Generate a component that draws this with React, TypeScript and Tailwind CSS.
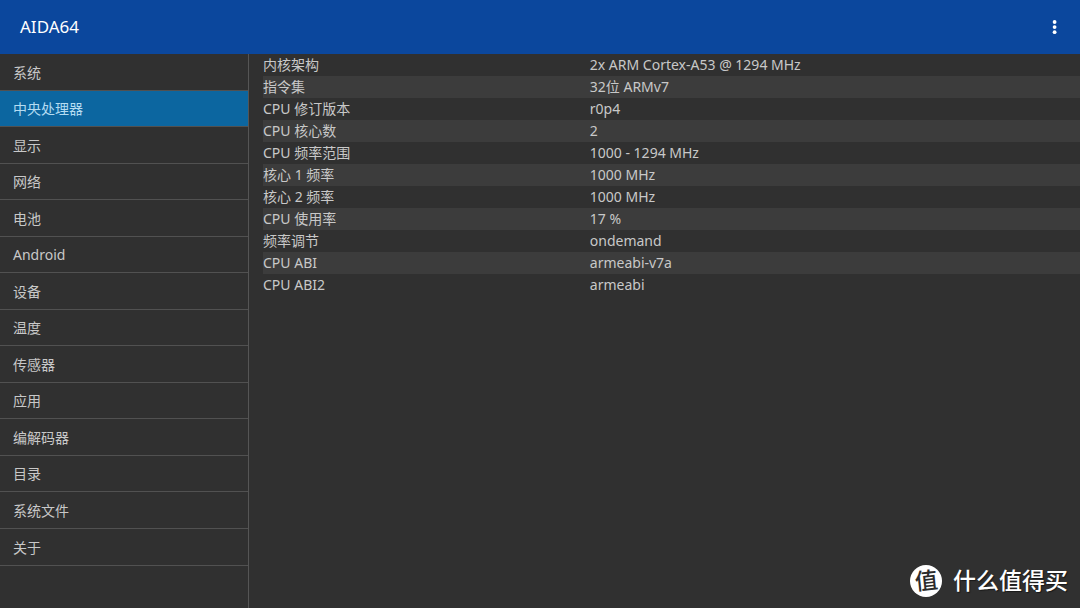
const sections = [
  '系统',
  '中央处理器',
  '显示',
  '网络',
  '电池',
  'Android',
  '设备',
  '温度',
  '传感器',
  '应用',
  '编解码器',
  '目录',
  '系统文件',
  '关于',
];

const cpuInfo: [string, string][] = [
  ['内核架构', '2x ARM Cortex-A53 @ 1294 MHz'],
  ['指令集', '32位 ARMv7'],
  ['CPU 修订版本', 'r0p4'],
  ['CPU 核心数', '2'],
  ['CPU 频率范围', '1000 - 1294 MHz'],
  ['核心 1 频率', '1000 MHz'],
  ['核心 2 频率', '1000 MHz'],
  ['CPU 使用率', '17 %'],
  ['频率调节', 'ondemand'],
  ['CPU ABI', 'armeabi-v7a'],
  ['CPU ABI2', 'armeabi'],
];

function AppBar() {
  return (
    <header className="flex h-[54px] shrink-0 items-center justify-between bg-[#0b479d] pl-5 pr-3 text-white">
      <h1 className="text-[17px] leading-6">AIDA64</h1>
      <button type="button" aria-label="更多选项" className="flex h-9 w-7 items-center justify-center">
        <svg width="6" height="16" viewBox="0 0 6 16" fill="currentColor" aria-hidden="true">
          <circle cx="3.6" cy="3" r="1.9" />
          <circle cx="3.6" cy="8.1" r="1.9" />
          <circle cx="3.6" cy="13.2" r="1.9" />
        </svg>
      </button>
    </header>
  );
}

function Sidebar({ active }: { active: string }) {
  return (
    <nav className="w-[249px] shrink-0 border-r border-[#555555]">
      <ul>
        {sections.map((name) => (
          <li key={name} className="flex border-b border-[#515151] odd:h-[37px] even:h-9 last:min-h-[37px]">
            <a
              href="#"
              aria-current={name === active ? 'page' : undefined}
              className={
                name === active
                  ? 'flex flex-1 items-center bg-[#0c66a0] pl-[13px] text-[#b4dcf2]'
                  : 'flex flex-1 items-center pl-[13px]'
              }
            >
              {name}
            </a>
          </li>
        ))}
      </ul>
    </nav>
  );
}

function InfoTable() {
  return (
    <main className="min-w-0 flex-1 pl-[14px]">
      <table className="w-full table-fixed border-collapse text-left">
        <tbody>
          {cpuInfo.map(([label, value]) => (
            <tr key={label} className="h-[22px] even:bg-[#3c3c3c]">
              <th scope="row" className="w-2/5 p-0 font-normal leading-[22px]">
                {label}
              </th>
              <td className="p-0 leading-[22px]">{value}</td>
            </tr>
          ))}
        </tbody>
      </table>
    </main>
  );
}

function Watermark() {
  return (
    <div className="absolute bottom-[11px] right-3 flex items-center gap-[11px] text-white">
      <span className="flex size-8 items-center justify-center rounded-full bg-white text-[#2b2b2b]">
        <span className="-rotate-6 pb-[3px] text-[23px] font-medium leading-7">值</span>
      </span>
      <span className="pb-[2px] text-[23px] font-medium leading-7 [text-shadow:1px_1px_1px_#00000080]">什么值得买</span>
    </div>
  );
}

export default function App() {
  return (
    <div
      lang="zh-CN"
      className="relative flex min-h-screen flex-col bg-[#303030] font-['Noto_Sans','Noto_Sans_CJK_SC',sans-serif] text-[14px] text-[#c8c8c8]"
    >
      <AppBar />
      <div className="flex flex-1">
        <Sidebar active="中央处理器" />
        <InfoTable />
      </div>
      <Watermark />
    </div>
  );
}
